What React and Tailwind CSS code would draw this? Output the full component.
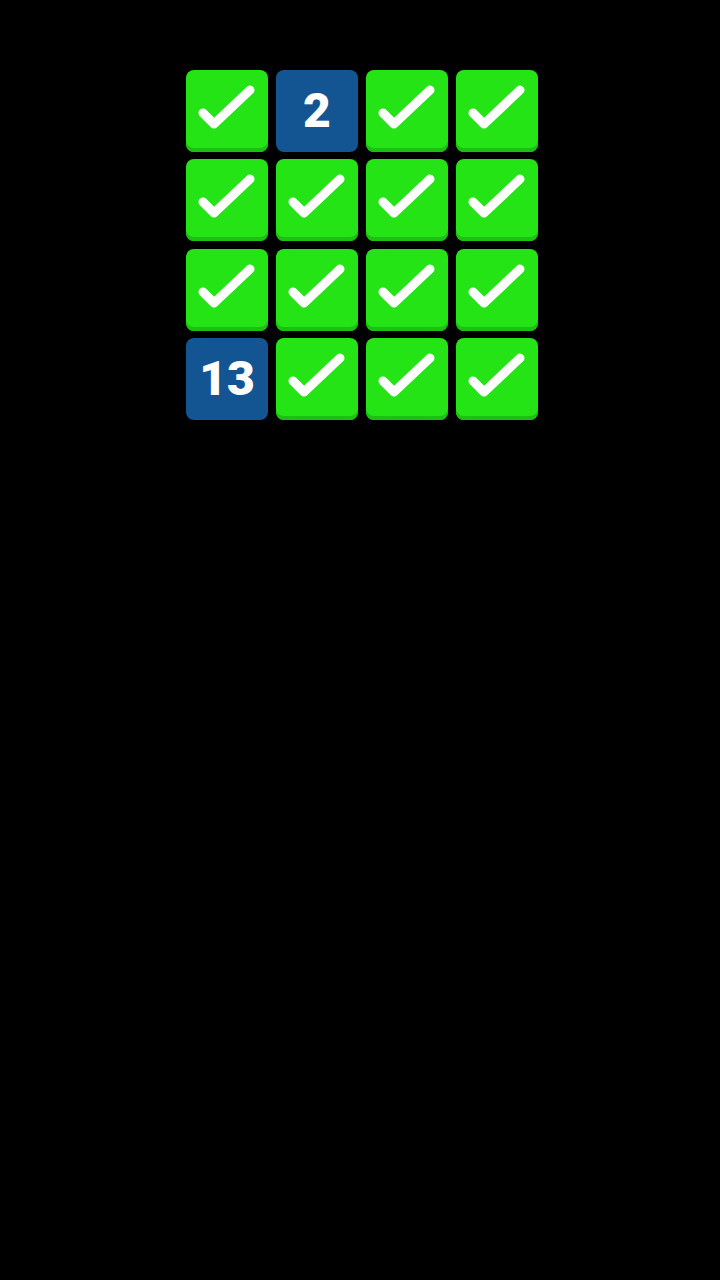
const cells = [
  'ok', 2, 'ok', 'ok',
  'ok', 'ok', 'ok', 'ok',
  'ok', 'ok', 'ok', 'ok',
  13, 'ok', 'ok', 'ok',
]

const Check = () => (
  <svg width="82" height="82" viewBox="0 0 82 82" fill="none">
    <path
      d="M17 43 L28 54 L64 20"
      stroke="white"
      strokeWidth="9"
      strokeLinecap="round"
      strokeLinejoin="round"
    />
  </svg>
)

export default function App() {
  return (
    <div className="min-h-[1280px] w-[720px] bg-black pt-[70px]">
      <div className="ml-[186px] grid w-[352px] grid-cols-4 gap-x-[8px] gap-y-[7.3px]">
        {cells.map((c, i) =>
          c === 'ok' ? (
            <div
              key={i}
              className="h-[82px] w-[82px] overflow-hidden rounded-[8px] bg-[#24e416] shadow-[inset_0_-4px_0_#1cc012]"
            >
              <Check />
            </div>
          ) : (
            <div
              key={i}
              className="flex h-[82px] w-[82px] items-center justify-center rounded-[8px] bg-[#135593] font-['Roboto',sans-serif] text-[48px] font-black leading-none text-white"
            >
              {c}
            </div>
          )
        )}
      </div>
    </div>
  )
}
